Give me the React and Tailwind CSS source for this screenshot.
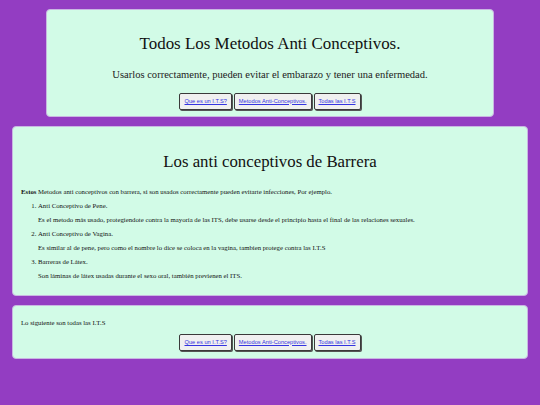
import React from 'react';

const LINKS = ['Que es un I.T.S?', 'Metodos Anti-Conceptivos.', 'Todas las I.T.S'];

const METODOS = [
  { nombre: 'Anti Conceptivo de Pene.', desc: 'Es el metodo más usado, protegiendote contra la mayoría de las ITS, debe usarse desde el principio hasta el final de las relaciones sexuales.' },
  { nombre: 'Anti Conceptivo de Vagina.', desc: 'Es similar al de pene, pero como el nombre lo dice se coloca en la vagina, tambien protege contra las I.T.S' },
  { nombre: 'Barreras de Látex.', desc: 'Son láminas de látex usadas durante el sexo oral, también previenen el ITS.' },
];

function Botones({ className = '' }) {
  return (
    <div className={`flex justify-center gap-[2px] ${className}`}>
      {LINKS.map(l => (
        <button
          key={l}
          className="h-[17px] px-[4px] bg-[#f0f0f0] border border-[#3a3a3a] rounded-[2px] shadow-[1px_1px_0_#555] font-['Liberation_Sans',sans-serif] text-[5.7px] leading-none"
        >
          <a href="#" className="text-[#3434e0] underline">{l}</a>
        </button>
      ))}
    </div>
  );
}

export default function App() {
  return (
    <div className="min-h-[405px] bg-[#933dc2] px-[12px] pt-[9px] pb-[40px] flex flex-col gap-[9px] font-['Liberation_Serif',serif] text-[#111]">
      {/* Encabezado */}
      <header className="w-[448px] mx-auto bg-[#d2fbe7] border border-[#c9b6e2] rounded-[4px] pt-[24px] pb-[6px] text-center">
        <h1 className="text-[16.95px] leading-[20px]">Todos Los Metodos Anti Conceptivos.</h1>
        <p className="mt-[15px] text-[10.55px] leading-[12px] text-[#222]">
          Usarlos correctamente, pueden evitar el embarazo y tener una enfermedad.
        </p>
        <Botones className="mt-[12px]" />
      </header>

      {/* Barrera */}
      <section className="bg-[#d2fbe7] border border-[#c9b6e2] rounded-[4px] pt-[25px] pb-[12px] px-[8px]">
        <h2 className="text-center text-[16.8px] leading-[20px]">Los anti conceptivos de Barrera</h2>
        <p className="mt-[13px] text-[6.75px] leading-[14px]">
          <b>Estos</b> Metodos anti conceptivos con barrera, si son usados correctamente pueden evitarte infecciones, Por ejemplo.
        </p>
        <ol className="list-decimal pl-[17px] text-[6.75px] leading-[14px]">
          {METODOS.map(m => (
            <li key={m.nombre}>
              {m.nombre}
              <p>{m.desc}</p>
            </li>
          ))}
        </ol>
      </section>

      {/* Todas */}
      <section className="bg-[#d2fbe7] border border-[#c9b6e2] rounded-[4px] pt-[10px] pb-[7px] px-[8px]">
        <p className="text-[6.75px] leading-[14px]">Lo siguiente son todas las I.T.S</p>
        <Botones className="mt-[4px]" />
      </section>
    </div>
  );
}
